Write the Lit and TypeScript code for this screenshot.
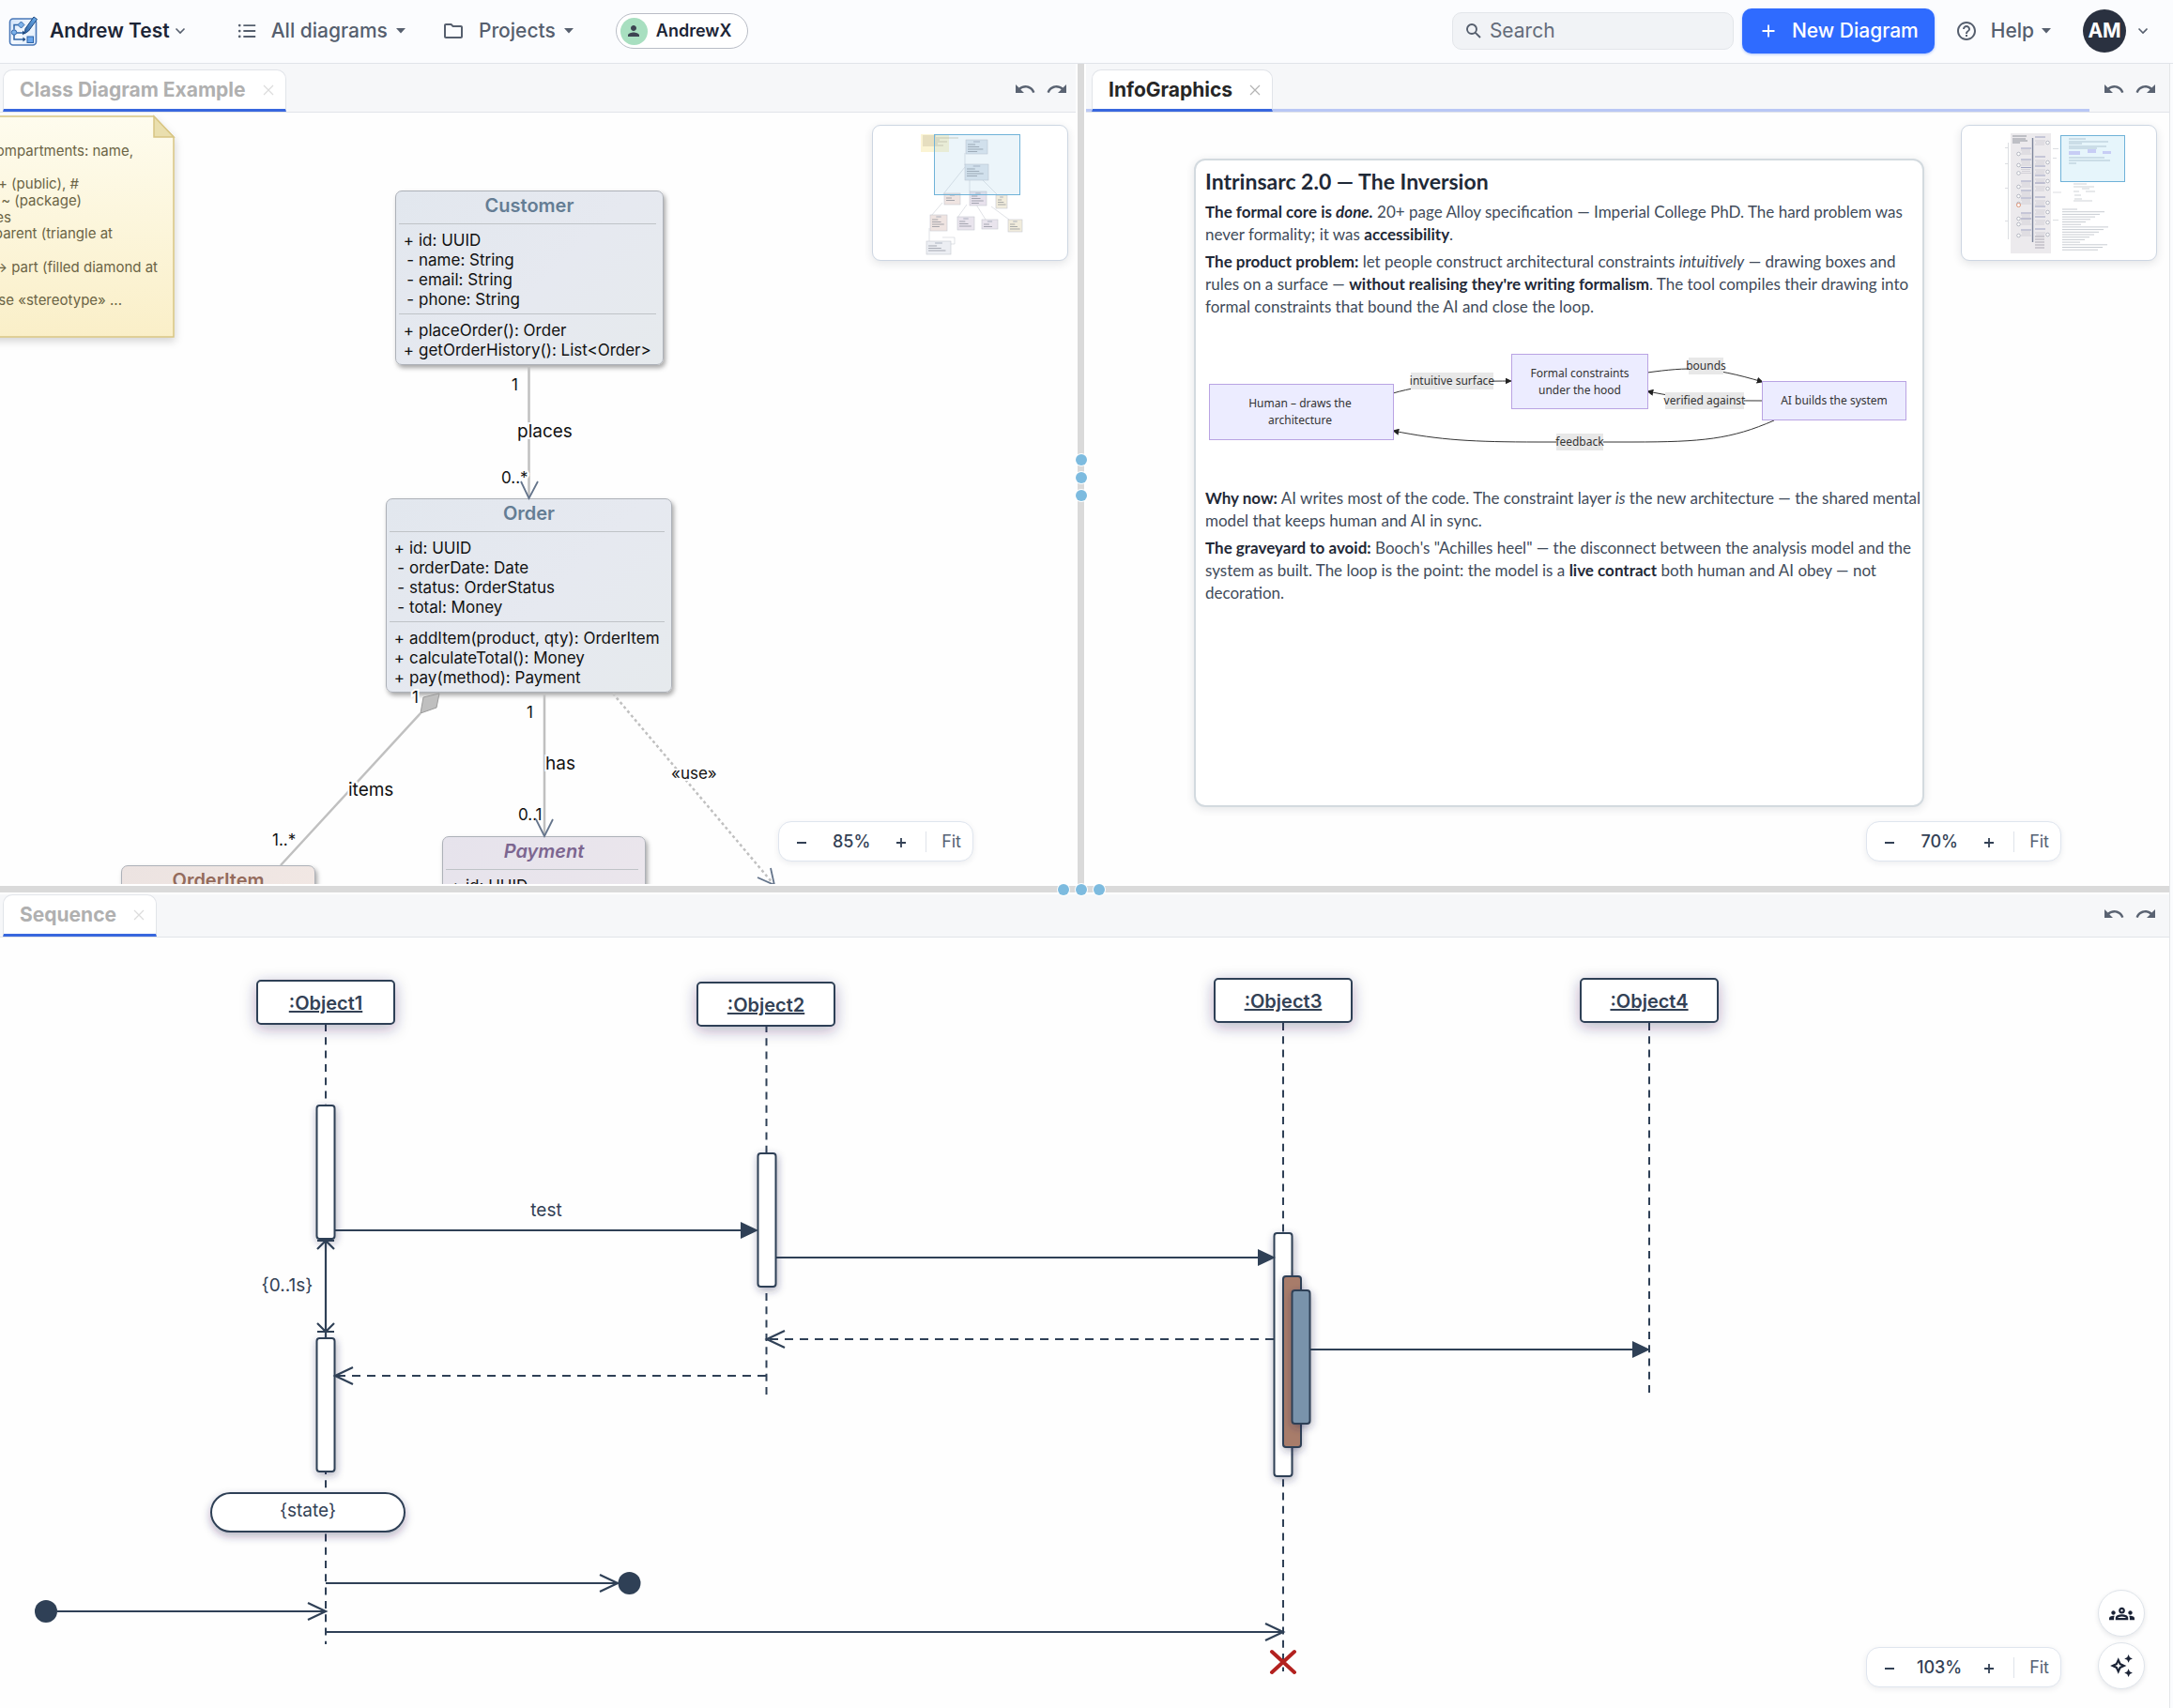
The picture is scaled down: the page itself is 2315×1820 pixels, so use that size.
import { LitElement, html, svg, css, nothing } from "lit";
import { customElement, property } from "lit/decorators.js";

/* ---------- shared data ---------- */

interface ClassSpec {
  name: string; tone: string; left: number; top: number; width: number; italic?: boolean;
  attributes: string[]; operations: string[];
}

const CLASSES: ClassSpec[] = [
  {
    name: "Customer", tone: "blue", left: 421, top: 83, width: 286,
    attributes: ["+ id: UUID", "- name: String", "- email: String", "- phone: String"],
    operations: ["+ placeOrder(): Order", "+ getOrderHistory(): List<Order>"],
  },
  {
    name: "Order", tone: "blue", left: 411, top: 411, width: 305,
    attributes: ["+ id: UUID", "- orderDate: Date", "- status: OrderStatus", "- total: Money"],
    operations: ["+ addItem(product, qty): OrderItem", "+ calculateTotal(): Money", "+ pay(method): Payment"],
  },
  { name: "Payment", tone: "purple", italic: true, left: 471, top: 771, width: 217, attributes: ["+ id: UUID"], operations: [] },
  { name: "OrderItem", tone: "brown", left: 129, top: 802, width: 207, attributes: [], operations: [] },
];

const icon = (body: unknown, size = 24, box = 24) => html`
  <svg width=${size} height=${size} viewBox="0 0 ${box} ${box}" fill="currentColor" aria-hidden="true">${body}</svg>`;

const undoPath = svg`<path d="M12.5 8c-2.65 0-5.05.99-6.9 2.6L2 7v9h9l-3.62-3.62c1.39-1.16 3.16-1.88 5.12-1.88 3.54 0 6.55 2.31 7.6 5.5l2.37-.78C21.08 11.03 17.15 8 12.5 8z"/>`;
const redoPath = svg`<path d="M18.4 10.6C16.55 8.99 14.15 8 11.5 8c-4.65 0-8.58 3.03-9.96 7.22L3.9 16c1.05-3.19 4.05-5.5 7.6-5.5 1.95 0 3.73.72 5.12 1.88L13 16h9V7l-3.6 3.6z"/>`;
const caretPath = svg`<path d="M7 9l5 5.500 5-5.500z"/>`;
const chevronPath = svg`<path d="M1.500 3.500 6 8l4.500-4.500" fill="none" stroke="currentColor" stroke-width="1.600"/>`;
const crossPath = svg`<path d="M1 1l10 10M11 1L1 11" fill="none" stroke="currentColor" stroke-width="1.200"/>`;

const resetButton = css`
  button { font: inherit; color: inherit; background: none; border: 0; padding: 0; margin: 0; cursor: pointer; display: inline-flex; align-items: center; }
  svg { display: block; flex: none; }
`;

/* ---------- header ---------- */

@customElement("top-bar")
export class TopBar extends LitElement {
  static styles = [resetButton, css`
    :host { display: flex; align-items: center; height: 66px; padding: 0 26px 1px 9px; box-sizing: content-box; border-bottom: 1px solid #e1e4e9; background: #fbfcfe; color: #565f6e; font-size: 21px; font-weight: 500; line-height: 26px; }
    .logo { margin-right: 12px; }
    .team { color: #1c2536; font-weight: 600; gap: 5px; }
    .team svg, .account svg { color: #565f6e; }
    .nav { display: flex; align-items: center; gap: 32px; margin-left: 54px; }
    .item { gap: 15px; }
    .item .caret { margin-left: -13px; }
    .member { height: 38px; box-sizing: border-box; gap: 9px; padding: 0 17px 0 4px; margin-left: 6px; border: 1px solid #b9bdc6; border-radius: 20px; background: #fff; color: #1c2536; font-size: 18px; font-weight: 600; }
    .face { width: 29px; height: 29px; border-radius: 50%; background: #a8dfc0; color: #3d4452; display: grid; place-items: center; }
    .spacer { flex: 1; }
    .search { display: flex; align-items: center; gap: 8px; box-sizing: border-box; width: 300px; height: 40px; padding: 0 13px; border: 1px solid #e3e6ea; border-radius: 10px; background: #f1f3f6; }
    .search input { flex: 1; min-width: 0; border: 0; outline: 0; padding: 0; background: none; font: inherit; font-weight: 400; color: #565f6e; }
    .search input::placeholder { color: #646c7a; opacity: 1; }
    .new { height: 48px; margin-left: 9px; padding: 0 17px 0 21px; gap: 18px; border-radius: 10px; background: #2f6bff; color: #fff; box-shadow: 0 1px 3px #2f6bff66; }
    .help { margin-left: 22px; gap: 14px; }
    .help .caret { margin-left: -13px; }
    .account { margin-left: 27px; gap: 12px; }
    .initials { width: 46px; height: 46px; border-radius: 50%; background: #2a3140; color: #fff; font-weight: 700; display: grid; place-items: center; }
  `];

  render() {
    return html`
      <svg class="logo" width="32" height="34" viewBox="0 0 32 34" aria-hidden="true">
        <defs>
          <linearGradient id="pen" x1="0" y1="1" x2="1" y2="0"><stop offset="0" stop-color="#2c5f9e"/><stop offset="1" stop-color="#6fb1f0"/></linearGradient>
          <linearGradient id="tile" x1="0" y1="0" x2="1" y2="1"><stop offset="0" stop-color="#cfe1f8"/><stop offset=".5" stop-color="#f4f9ff"/><stop offset="1" stop-color="#dbe9fa"/></linearGradient>
        </defs>
        <rect x="1.500" y="4" width="28" height="28" rx="3.500" fill="url(#tile)" stroke="#4a78b8" stroke-width="1.600"/>
        <path d="M11 10.500H6v5M6 21v5h11M9 19h7" fill="none" stroke="#2f65a8" stroke-width="1.500"/>
        <path d="M15 16.500l3 2.500-3 2.500zM15.500 23.500l3 2.500-3 2.500z" fill="#1f4a80"/>
        <path d="M13.500 7l3.500 3.500-3.500 3.500-3.500-3.500z" fill="#7db2ea" stroke="#2f65a8"/>
        <circle cx="6" cy="18.500" r="2.700" fill="#7db2ea" stroke="#2f65a8"/>
        <rect x="20" y="23" width="6.500" height="6.500" fill="#6aa5ea" stroke="#2f65a8"/>
        <path d="M27 2l3.500 2.500L21.500 17l-4.500 3 1-5.500z" fill="url(#pen)" stroke="#1f4a80" stroke-width="1"/>
      </svg>
      <button class="team">Andrew Test ${icon(chevronPath, 12, 12)}</button>
      <nav class="nav">
        <button class="item">${icon(svg`<g><circle cx="3.500" cy="5.500" r="1.500"/><circle cx="3.500" cy="12" r="1.500"/><circle cx="3.500" cy="18.500" r="1.500"/><path d="M8 4.500h14v2H8zM8 11h14v2H8zM8 17.500h14v2H8z"/></g>`, 22)}All diagrams<span class="caret">${icon(caretPath)}</span></button>
        <button class="item">${icon(svg`<path d="M9.170 6l2 2H20v10H4V6h5.170M10 4H4c-1.100 0-1.990.9-1.990 2L2 18c0 1.100.9 2 2 2h16c1.100 0 2-.9 2-2V8c0-1.100-.9-2-2-2h-8l-2-2z"/>`)}Projects<span class="caret">${icon(caretPath)}</span></button>
        <button class="member"><span class="face">${icon(svg`<path d="M12 12c2.210 0 4-1.790 4-4s-1.790-4-4-4-4 1.790-4 4 1.790 4 4 4zm0 2c-2.670 0-8 1.340-8 4v2h16v-2c0-2.660-5.330-4-8-4z"/>`, 18)}</span>AndrewX</button>
      </nav>
      <span class="spacer"></span>
      <label class="search">${icon(svg`<path d="M7 2a5 5 0 100 10A5 5 0 007 2zM10.600 10.600L16 16" fill="none" stroke="currentColor" stroke-width="1.900"/>`, 18, 18)}<input type="search" placeholder="Search" aria-label="Search"></label>
      <button class="new">${icon(svg`<path d="M7 0.500v13M0.500 7h13" fill="none" stroke="currentColor" stroke-width="1.800"/>`, 14, 14)}New Diagram</button>
      <button class="help">${icon(svg`<path d="M11 18h2v-2h-2v2zm1-16C6.480 2 2 6.480 2 12s4.480 10 10 10 10-4.480 10-10S17.520 2 12 2zm0 18c-4.410 0-8-3.590-8-8s3.590-8 8-8 8 3.590 8 8-3.590 8-8 8zm0-14c-2.210 0-4 1.790-4 4h2c0-1.100.9-2 2-2s2 .9 2 2c0 2-3 1.750-3 5h2c0-2.250 3-2.500 3-5 0-2.210-1.790-4-4-4z"/>`)}Help<span class="caret">${icon(caretPath)}</span></button>
      <button class="account"><span class="initials">AM</span>${icon(chevronPath, 12, 12)}</button>`;
  }
}

/* ---------- pane: tab strip, canvas, zoom control ---------- */

@customElement("diagram-pane")
export class DiagramPane extends LitElement {
  @property() name = "";
  @property() zoom = "100%";
  @property({ type: Boolean, reflect: true }) current = false;
  @property({ type: Boolean, reflect: true }) edge = false;
  @property({ type: Boolean, reflect: true }) low = false;

  static styles = [resetButton, css`
    :host { display: flex; flex-direction: column; min-width: 0; min-height: 0; overflow: hidden; background: #fefefe; }
    .strip { display: flex; align-items: stretch; padding: 6px 6px 0 3px; background: #f6f7f9; border-bottom: 1px solid #e1e4e9; }
    :host([current]) .strip { padding-left: 6px; }
    :host([edge]) .strip { padding-right: 11px; }
    :host([low]) .strip { padding-top: 0; }
    .tab { height: 45px; box-sizing: border-box; display: flex; align-items: center; gap: 18px; padding: 0 12px 0 17px; border: 1px solid #e1e4e9; border-bottom: 3px solid #3867de; border-radius: 10px 10px 0 0; background: #fff; color: #b0b0b0; font-size: 21px; font-weight: 700; line-height: 26px; }
    .close { color: #dcdcdc; }
    :host([current]) .tab { color: #262626; }
    :host([current]) .close { color: #b4b4b4; }
    .rail { flex: 1; margin-right: 6px; }
    :host([current]) .rail { border-bottom: 3px solid #b9c7f5; }
    :host([current]) .strip { position: relative; }
    :host([current]) .strip::before { content: ""; position: absolute; left: 0; bottom: 0; width: 6px; height: 3px; background: #b9c7f5; }
    .history { display: flex; align-items: center; gap: 10px; color: #5a6372; padding: 0 2px 3px 8px; }
    .canvas { position: relative; flex: 1; min-height: 0; overflow: hidden; }
    .zoom { position: absolute; right: 109px; bottom: 24px; height: 43px; box-sizing: border-box; display: flex; align-items: center; padding: 0 12px 0 18px; border: 1px solid #dfe5ee; border-radius: 14px; background: #fff; box-shadow: 0 2px 6px #1e293b14; color: #334155; font-size: 18px; font-weight: 500; line-height: 22px; }
    :host([edge]) .zoom { right: 115px; }
    :host([low]) .zoom { bottom: 22px; }
    .level { width: 94px; text-align: center; }
    .fit { margin-left: 20px; padding-left: 16px; border-left: 1px solid #dfe3ea; color: #566274; font-weight: 400; }
  `];

  render() {
    return html`
      <div class="strip">
        <div class="tab">${this.name}<button class="close" aria-label="Close tab">${icon(crossPath, 12, 12)}</button></div>
        <span class="rail"></span>
        <div class="history">
          <button aria-label="Undo">${icon(undoPath)}</button>
          <button aria-label="Redo">${icon(redoPath)}</button>
        </div>
      </div>
      <div class="canvas">
        <slot></slot>
        <div class="zoom">
          <button aria-label="Zoom out">${icon(svg`<path d="M1 7h10" stroke="currentColor" stroke-width="2"/>`, 12, 12)}</button>
          <span class="level">${this.zoom}</span>
          <button aria-label="Zoom in">${icon(svg`<path d="M1 7h10M6 2v10" stroke="currentColor" stroke-width="1.800"/>`, 12, 12)}</button>
          <button class="fit">Fit</button>
        </div>
      </div>`;
  }
}

/* ---------- class diagram ---------- */

@customElement("class-node")
export class ClassNode extends LitElement {
  @property({ attribute: false }) spec!: ClassSpec;

  static styles = css`
    :host { display: block; }
    .box { box-sizing: border-box; padding: 3px 7px 4px 3px; min-height: 60px; border: 1px solid #adb1b8; border-radius: 7px; color: #111; font-size: 17px; line-height: 21px; box-shadow: 2px 3px 5px #00000059; }
    .blue { background: linear-gradient(135deg, #e2e7ee, #e6e9f0 55%, #e6eaed); }
    .purple { background: linear-gradient(135deg, #e6e3ec, #ebe6ec); }
    .brown { background: linear-gradient(135deg, #ece3e1, #f2e8e4); }
    h3 { margin: 0 -4px 7px 0; font-size: 20px; line-height: 24px; font-weight: 600; text-align: center; }
    .blue h3 { color: #647d94; }
    .purple h3 { color: #7c6690; }
    .brown h3 { color: #946b5c; }
    .italic { font-style: italic; }
    ul { list-style: none; margin: 0; padding: 7px 0 4px; border-top: 1px solid #bfc3c7; }
    ul:last-child { padding-bottom: 0; }
    li { display: flex; gap: 5px; white-space: nowrap; }
    .mark { width: 16px; text-align: right; }
  `;

  render() {
    const { name, tone, italic, attributes, operations } = this.spec;
    const list = (rows: string[]) => rows.length
      ? html`<ul>${rows.map((r) => html`<li><span class="mark">${r[0]}</span><span>${r.slice(2)}</span></li>`)}</ul>`
      : nothing;
    return html`<div class="box ${tone}">
      <h3 class=${italic ? "italic" : ""}>${name}</h3>
      ${list(attributes)}${list(operations)}
    </div>`;
  }
}

const miniClass = (x: number, y: number, w: number, h: number, fill: string) => svg`
  <g>
    <rect x=${x} y=${y} width=${w} height=${h} fill=${fill} stroke="#c5c8cf" stroke-width=".6"/>
    <path d=${`M${x + w * 0.35} ${y + 2}h${w * 0.3}`} stroke="#9aa2b2" stroke-width=".8"/>
    ${Array.from({ length: Math.floor((h - 5) / 2.5) }, (_, i) => svg`<path d=${`M${x + 2} ${y + 5 + i * 2.5}h${w * (0.35 + ((i * 37) % 5) * 0.09)}`} stroke="#6d7380" stroke-width=".8" stroke-opacity=".7"/>`)}
  </g>`;

@customElement("class-diagram")
export class ClassDiagram extends LitElement {
  static styles = css`
    :host { display: block; }
    .links { position: absolute; inset: 0; width: 100%; height: 100%; }
    .node { position: absolute; }
    .minimap { position: absolute; top: 13px; right: 8px; width: 209px; height: 145px; box-sizing: border-box; border: 1px solid #cdd6e2; border-radius: 9px; background: #fff; box-shadow: 0 3px 10px #1e293b1f; }
    .minimap svg { display: block; }
    .halo { paint-order: stroke; stroke: #fefefe; stroke-width: 4px; fill: #111; }
    .end { font-size: 17px; }
    .label { font-size: 19px; }
    .note { fill: #6b6445; font-size: 15px; }
  `;

  render() {
    const note: [number, number, string][] = [
      [142, 46, "ompartments: name,"], [84, 81, "+ (public), #"], [87, 99, "~ (package)"], [12, 117, "es"],
      [120, 134, "parent (triangle at"], [168, 170, "→ part (filled diamond at"], [130, 205, "se «stereotype» ..."],
    ];
    const text = (x: number, y: number, cls: string, t: string) => svg`<text class="halo ${cls}" x=${x} y=${y}>${t}</text>`;
    return html`
      <svg class="links">
        <defs>
          <linearGradient id="paper" x1="0" y1="0" x2="0" y2="1"><stop offset="0" stop-color="#fefcee"/><stop offset="1" stop-color="#faefc8"/></linearGradient>
          <filter id="lift" x="-10%" y="-10%" width="120%" height="130%"><feDropShadow dx="1" dy="4" stdDeviation="4" flood-opacity=".16"/></filter>
        </defs>
        <path d="M-20 4H164L185 26V239H-20z" fill="url(#paper)" stroke="#d8c583" stroke-width="1.500" filter="url(#lift)"/>
        <path d="M164 4V26H185z" fill="#eadfae" stroke="#d8c583" stroke-width="1.500"/>
        <g text-anchor="end">${note.map(([x, y, t]) => svg`<text class="note" x=${x} y=${y}>${t}</text>`)}</g>
      </svg>
      ${CLASSES.map((c) => html`<class-node class="node" .spec=${c} style="left:${c.left}px;top:${c.top}px;width:${c.width}px"></class-node>`)}
      <svg class="links">
        <g fill="none" stroke="#c0c0c0" stroke-width="2.500">
          <path d="M563.500 270V410M580 619V770M448 640L299 802"/>
          <path d="M653 619L824 822" stroke-dasharray="3 3"/>
          <path d="M468 619L465 634L448 640L451 623z" fill="#bfbfbf" stroke="#9a9a9a" stroke-width="1"/>
        </g>
        <g>
          ${text(545, 296, "end", "1")}${text(551, 346, "label", "places")}${text(534, 395, "end", "0..*")}
          ${text(439, 629, "end", "1")}${text(371, 728, "label", "items")}${text(290, 781, "end", "1..*")}
          ${text(561, 645, "end", "1")}${text(581, 700, "label", "has")}${text(552, 754, "end", "0..1")}
          ${text(715, 710, "end", "«use»")}
        </g>
        <path d="M555 393L563.500 411L573 393M571 753L580 771L589 753M807 815L825 823L821 805" fill="none" stroke="#64748b" stroke-width="1.800"/>
      </svg>
      <div class="minimap">
        <svg width="207" height="142" viewBox="930 134 207 142">
          <rect x="981" y="143" width="30" height="19" fill="#fbf4d4"/>
          <path d="M983 145h14M983 147h38M983 149h18M983 151h26M983 153h16M983 155h22" stroke="#a69f83" stroke-width=".5"/>
          <path d="M1028 163V176M1028 178L1004 208M1033 190V204M1045 190L1064 209M1004 216L992 230M1030 218L1020 232M1040 218L1050 234M1056 220L1075 234M990 243V258M1004 253H1017V260H1012" fill="none" stroke="#d3d6db" stroke-width=".7"/>
          ${miniClass(1029, 149, 23, 15, "#dfe6ee")}${miniClass(1028, 175, 25, 17, "#dfe6ee")}
          ${miniClass(1006, 206, 17, 12, "#efe4e1")}${miniClass(1033, 204, 18, 15, "#e7e1ec")}${miniClass(1061, 208, 12, 14, "#f1ecdc")}
          ${miniClass(991, 229, 18, 17, "#efe4e1")}${miniClass(1020, 231, 18, 14, "#e9e4ed")}${miniClass(1046, 234, 17, 10, "#e9e4ed")}${miniClass(1074, 234, 15, 13, "#f1ecdc")}
          ${miniClass(987, 257, 26, 14, "#eceef3")}
          <rect x="995.500" y="143.500" width="91" height="64" fill="#8cc3e0" fill-opacity=".17" stroke="#6fb2d8"/>
        </svg>
      </div>`;
  }
}

/* ---------- infographic ---------- */

@customElement("info-graphic")
export class InfoGraphic extends LitElement {
  static styles = css`
    :host { display: block; }
    .card { position: absolute; left: 115px; top: 49px; width: 778px; height: 691px; box-sizing: border-box; padding: 9px 10px; border: 2px solid #d3dadf; border-radius: 12px; background: #fff; box-shadow: 0 2px 10px #1e293b1f; color: #414b5a; font: 17px/24px Lato, "Open Sans", sans-serif; }
    h2 { margin: 0 0 8px; color: #1f2937; font-size: 23px; line-height: 26px; font-weight: 700; }
    p { margin: 0 0 5px; white-space: nowrap; }
    b { color: #1f2937; }
    .flow { display: block; width: 753px; height: 175px; margin: 0; }
    .flow text { font: 12px "Noto Sans", "Open Sans", sans-serif; fill: #333; text-anchor: middle; }
    .minimap { position: absolute; top: 13px; right: 13px; width: 209px; height: 145px; box-sizing: border-box; border: 1px solid #cdd6e2; border-radius: 9px; background: #fff; box-shadow: 0 3px 10px #1e293b1f; }
    .minimap svg { display: block; }
  `;

  render() {
    const box = (x: number, y: number, w: number, h: number) => svg`<rect x=${x} y=${y} width=${w} height=${h} fill="#ececff" stroke="#b9a3e3"/>`;
    const tag = (x: number, y: number, w: number, t: string) => svg`<g><rect x=${x} y=${y} width=${w} height="18" fill="#e8e8e8"/><text x=${x + w / 2} y=${y + 13}>${t}</text></g>`;
    const word = (x: number, y: number, t: string) => svg`<text x=${x} y=${y}>${t}</text>`;
    const events = [[1, 146], [0, 158], [1, 167], [0, 170], [1, 177], [0, 178.500], [1, 187], [1, 195], [0, 193], [0, 203], [0, 211], [1, 210], [1, 220], [0, 227], [0, 233], [1, 231], [0, 245], [1, 244]];
    return html`
      <article class="card">
        <h2>Intrinsarc 2.0 — The Inversion</h2>
        <p><b>The formal core is <i>done.</i></b> 20+ page Alloy specification — Imperial College PhD. The hard problem was<br>never formality; it was <b>accessibility</b>.</p>
        <p><b>The product problem:</b> let people construct architectural constraints <i>intuitively</i> — drawing boxes and<br>rules on a surface — <b>without realising they're writing formalism</b>. The tool compiles their drawing into<br>formal constraints that bound the AI and close the loop.</p>
        <svg class="flow" viewBox="1285 344 753 175">
          <defs><marker id="tip" viewBox="0 0 10 10" refX="9" refY="5" markerWidth="7" markerHeight="7" markerUnits="userSpaceOnUse" orient="auto"><path d="M0 0L10 5L0 10z" fill="#222"/></marker></defs>
          <g fill="none" stroke="#333" marker-end="url(#tip)">
            <path d="M1485 419C1520 409 1560 406 1611 406" marker-end="url(#tip)"/><path d="M1756 397C1800 391 1822 390 1879 407" marker-end="url(#tip)"/>
            <path d="M1878 427C1830 427 1800 426 1756 417" marker-end="url(#tip)"/><path d="M1891 448C1845 468 1815 471 1740 471H1640C1570 471 1535 469 1485 459" marker-end="url(#tip)"/>
          </g>
          ${box(1289.500, 409.500, 196, 59)}${box(1611.500, 377.500, 145, 58)}${box(1878.500, 406.500, 153, 41)}
          ${tag(1504, 397, 88, "intuitive surface")}${tag(1800, 381, 37, "bounds")}${tag(1775, 418, 84, "verified against")}${tag(1659, 462, 50, "feedback")}
          ${word(1386, 434, "Human – draws the")}${word(1386, 452, "architecture")}
          ${word(1684, 402, "Formal constraints")}${word(1684, 420, "under the hood")}
          ${word(1955, 431, "AI builds the system")}
        </svg>
        <p><b>Why now:</b> AI writes most of the code. The constraint layer <i>is</i> the new architecture — the shared mental<br>model that keeps human and AI in sync.</p>
        <p><b>The graveyard to avoid:</b> Booch's "Achilles heel" — the disconnect between the analysis model and the<br>system as built. The loop is the point: the model is a <b>live contract</b> both human and AI obey — not<br>decoration.</p>
      </article>
      <div class="minimap">
        <svg width="207" height="142" viewBox="2090 134 207 142">
          <rect x="2142" y="142" width="43" height="128" fill="#eceaed"/>
          <path d="M2144 145h15M2144 148h14M2144 150h16M2144 152h8" stroke="#555b68" stroke-width=".6"/>
          <path d="M2165.500 147V258" stroke="#7c849b" stroke-width="1.400"/>
          ${events.map(([right, y]) => svg`<g>
            <path d=${right ? `M2168 ${y + 4}h11M2169 ${y + 6}h9M2168 ${y + 8}h10` : `M2153 ${y + 2}h10M2154 ${y + 4}h9M2153 ${y + 6}h11`} stroke="#c3c0ca" stroke-width=".6"/>
            <path d=${right ? `M2168 ${y}h11` : `M2153 ${y}h11`} stroke="#8d93b8" stroke-width=".8"/>
            <circle cx=${right ? 2181.500 : 2150.500} cy=${y + 6} r="1.800" fill="#fff" stroke="#9095a5" stroke-width=".6"/>
          </g>`)}
          <circle cx="2150.500" cy="218.500" r="2" fill="#fff" stroke="#d98a6a" stroke-width=".9"/>
          <path d="M2168 252h10M2168 255h10M2168 258h10M2168 261h10M2168 264h10" stroke="#c2c0c8" stroke-width="1.500"/>
          <path d="M2139.500 152V255M2187 158.500h6M2187 168.500h4M2187 205h9M2187 234.500h6M2136 157.500h3M2136 174.500h3M2136 200.500h3M2136 235.500h3" stroke="#c4c8cf" stroke-width=".6"/>
          <path d="M2209 196h14M2209 199h22M2218 201h8M2209 204h6M2222 204h10M2210 208h7M2210 212h8M2209 214h20" stroke="#b0b5be" stroke-width=".6"/>
          ${Array.from({ length: 17 }, (_, i) => svg`<path d=${`M2197 ${223 + i * 2.700}h${16 + ((i * 29) % 34)}`} stroke="#a3a9b3" stroke-width=".6"/>`)}
          <rect x="2195.500" y="144.500" width="68" height="49" fill="#8cd0ee" fill-opacity=".22" stroke="#6fb2d8"/>
          <path d="M2204 148h18M2204 151h42M2204 153h14M2204 156h40M2204 158h30" stroke="#8fa5bb" stroke-width=".6"/>
          <path d="M2204 161h12v4h-12zM2224 159h9v4h-9zM2240 161h9v3h-9z" fill="#c7cdf5"/>
          <path d="M2204 168h38M2204 171h44M2204 174h8" stroke="#8fa5bb" stroke-width=".6"/>
        </svg>
      </div>`;
  }
}

/* ---------- sequence diagram ---------- */

@customElement("sequence-diagram")
export class SequenceDiagram extends LitElement {
  static styles = [resetButton, css`
    :host { display: block; }
    .drawing { position: absolute; inset: 0; width: 100%; height: 100%; }
    .text { fill: #334155; font-size: 19px; text-anchor: middle; }
    .head { font-size: 20px; font-weight: 600; text-decoration: underline; }
    .float { position: absolute; right: 26px; bottom: 20px; display: grid; gap: 6px; }
    .round { width: 50px; height: 50px; display: grid; place-items: center; border: 1px solid #dfe4ea; border-radius: 50%; background: #fff; color: #1b2336; box-shadow: 0 2px 5px #1e293b1a; }
  `];

  render() {
    // Canvas coordinates start below the tab strip.
    const head = (cx: number, y: number, name: string) => svg`<g>
      <rect x=${cx - 73} y=${y} width="146" height="46" rx="4" fill="#fff" stroke="#2f4056" stroke-width="2" filter="url(#glow)"/>
      <text class="text head" x=${cx} y=${y + 31}>${name}</text></g>`;
    const bar = (x: number, y: number, h: number, fill = "#fff") => svg`<rect x=${x} y=${y} width="19" height=${h} rx="3" fill=${fill} stroke="#2f4056" stroke-width="2" filter="url(#glow-bar)"/>`;
    const open = (x: number, y: number, dir: number) => svg`<path d=${`M${x - 19 * dir} ${y - 9}L${x} ${y}L${x - 19 * dir} ${y + 9}`}/>`;
    const solid = (x: number, y: number) => svg`<path d=${`M${x} ${y}l-19-9v18z`} fill="#2f4056" stroke="none"/>`;
    return html`
      <svg class="drawing">
        <defs>
          <filter id="glow" x="-30%" y="-60%" width="160%" height="240%"><feDropShadow dx="0" dy="4" stdDeviation="8" flood-color="#2a2350" flood-opacity=".34"/></filter>
          <filter id="glow-bar" x="-100%" y="-15%" width="300%" height="130%"><feDropShadow dx="1" dy="3" stdDeviation="4" flood-color="#2a2350" flood-opacity=".38"/></filter>
          <filter id="glow-pill" x="-15%" y="-60%" width="130%" height="240%"><feDropShadow dx="0" dy="4" stdDeviation="5" flood-color="#2a2350" flood-opacity=".34"/></filter>
        </defs>
        <g stroke="#2f4056" stroke-width="2" stroke-dasharray="8 6.300" fill="none">
          <path d="M347 92V753M816.500 93V487M1367 91V782M1757 91V485"/>
        </g>
        ${head(347, 46, ":Object1")}${head(816, 48, ":Object2")}${head(1367, 44, ":Object3")}${head(1757, 44, ":Object4")}
        ${bar(337.500, 179, 142)}${bar(337.500, 427, 142)}${bar(807.500, 230, 142)}
        ${bar(1357.500, 315, 259)}${bar(1367, 361, 182, "#a87b6b")}${bar(1376.500, 376, 142, "#7993ab")}
        <rect x="225" y="592" width="206" height="41" rx="20.500" fill="#fff" stroke="#2f4056" stroke-width="2" filter="url(#glow-pill)"/>
        <g stroke="#2f4056" stroke-width="2.200" fill="none">
          <path d="M357 312H806M826 341H1356M1396 439H1756M347 688H658M61 718H347M347 740H1367"/>
          <path d="M816 467H359M1357 428H819" stroke-dasharray="9 7"/>
          <path d="M347 323V427M338 323H356M338 420H356M338 332L347 323L356 332M338 411L347 420L356 411"/>
          ${open(357, 467, -1)}${open(817, 428, -1)}${open(658, 688, 1)}${open(347, 718, 1)}${open(1367, 740, 1)}
          ${solid(808, 312)}${solid(1359, 341)}${solid(1758, 439)}
        </g>
        <circle cx="670.500" cy="688" r="12" fill="#2f4056"/><circle cx="49" cy="718" r="12" fill="#2f4056"/>
        <path d="M1355 761L1379 783M1379 761L1355 783" stroke="#b3211f" stroke-width="4" stroke-linecap="round"/>
        <g>
          <text class="text" x="582" y="297">test</text>
          <text class="text" x="306" y="377">{0..1s}</text>
          <text class="text" x="328" y="617">{state}</text>
        </g>
      </svg>
      <div class="float">
        <button class="round" aria-label="Collaborators">${icon(svg`<path d="M4 13c1.100 0 2-.9 2-2s-.9-2-2-2-2 .9-2 2 .9 2 2 2zm1.130 1.100c-.37-.06-.74-.1-1.130-.1-.99 0-1.930.21-2.780.58C.48 14.900 0 15.620 0 16.430V18h4.500v-1.610c0-.83.23-1.610.63-2.290zM20 13c1.100 0 2-.9 2-2s-.9-2-2-2-2 .9-2 2 .9 2 2 2zm4 3.430c0-.81-.48-1.530-1.220-1.850-.85-.37-1.790-.58-2.780-.58-.39 0-.76.04-1.130.1.4.68.63 1.460.63 2.290V18H24v-1.570zm-7.760-2.780c-1.170-.52-2.610-.9-4.240-.9-1.630 0-3.070.39-4.240.9C6.680 14.130 6 15.210 6 16.390V18h12v-1.610c0-1.180-.68-2.260-1.760-2.740zM8.070 16c.09-.23.13-.39.91-.69.97-.38 1.990-.56 3.020-.56s2.050.18 3.020.56c.77.3.81.46.91.69H8.070zM12 8c.55 0 1 .45 1 1s-.45 1-1 1-1-.45-1-1 .45-1 1-1m0-2c-1.660 0-3 1.340-3 3s1.340 3 3 3 3-1.340 3-3-1.340-3-3-3z"/>`, 27)}</button>
        <button class="round" aria-label="Assistant">${icon(svg`<path d="M19 9l1.250-2.750L23 5l-2.750-1.250L19 1l-1.250 2.750L15 5l2.750 1.250zm0 6l-1.250 2.750L15 19l2.750 1.250L19 23l1.250-2.750L23 19l-2.750-1.250zm-7.500-5.500L9 4 6.500 9.500 1 12l5.500 2.500L9 20l2.500-5.500L17 12l-5.500-2.500zm-1.510 3.490L9 15.170l-.99-2.180L5.830 12l2.180-.99L9 8.830l.99 2.180 2.180.99-2.180.99z"/>`, 26)}</button>
      </div>`;
  }
}

/* ---------- page ---------- */

@customElement("app-root")
export class AppRoot extends LitElement {
  static styles = css`
    :host { display: grid; grid-template-rows: auto 1fr; height: 100vh; font-family: Inter, "Liberation Sans", sans-serif; background: #fbfcfe; overflow: hidden; }
    .work { display: grid; grid-template-rows: 874fr 11px 867fr; min-height: 0; margin-right: 3px; border-right: 1px solid #e3e5e8; background: #fff; }
    .row { display: grid; grid-template-columns: 1146fr 11px 1154fr; min-height: 0; }
    .grip { position: relative; display: flex; gap: 7px; align-items: center; justify-content: center; background: #dadada content-box; padding: 2px 0; }
    .tall { flex-direction: column; padding: 0 2px; }
    .tall::before, .wide::after { content: ""; }
    .dot { flex: none; width: 12px; height: 12px; border-radius: 50%; background: #7dbbdf; box-shadow: 0 0 0 1px #fff; }
    .front { z-index: 1; }
  `;

  render() {
    const dots = [0, 1, 2].map(() => html`<span class="dot"></span>`);
    return html`
      <top-bar></top-bar>
      <main class="work">
        <div class="row">
          <diagram-pane name="Class Diagram Example" zoom="85%"><class-diagram></class-diagram></diagram-pane>
          <div class="grip tall front" role="separator">${dots}</div>
          <diagram-pane name="InfoGraphics" zoom="70%" current edge><info-graphic></info-graphic></diagram-pane>
        </div>
        <div class="grip wide front" role="separator">${dots}</div>
        <diagram-pane name="Sequence" zoom="103%" edge low><sequence-diagram></sequence-diagram></diagram-pane>
      </main>`;
  }
}
